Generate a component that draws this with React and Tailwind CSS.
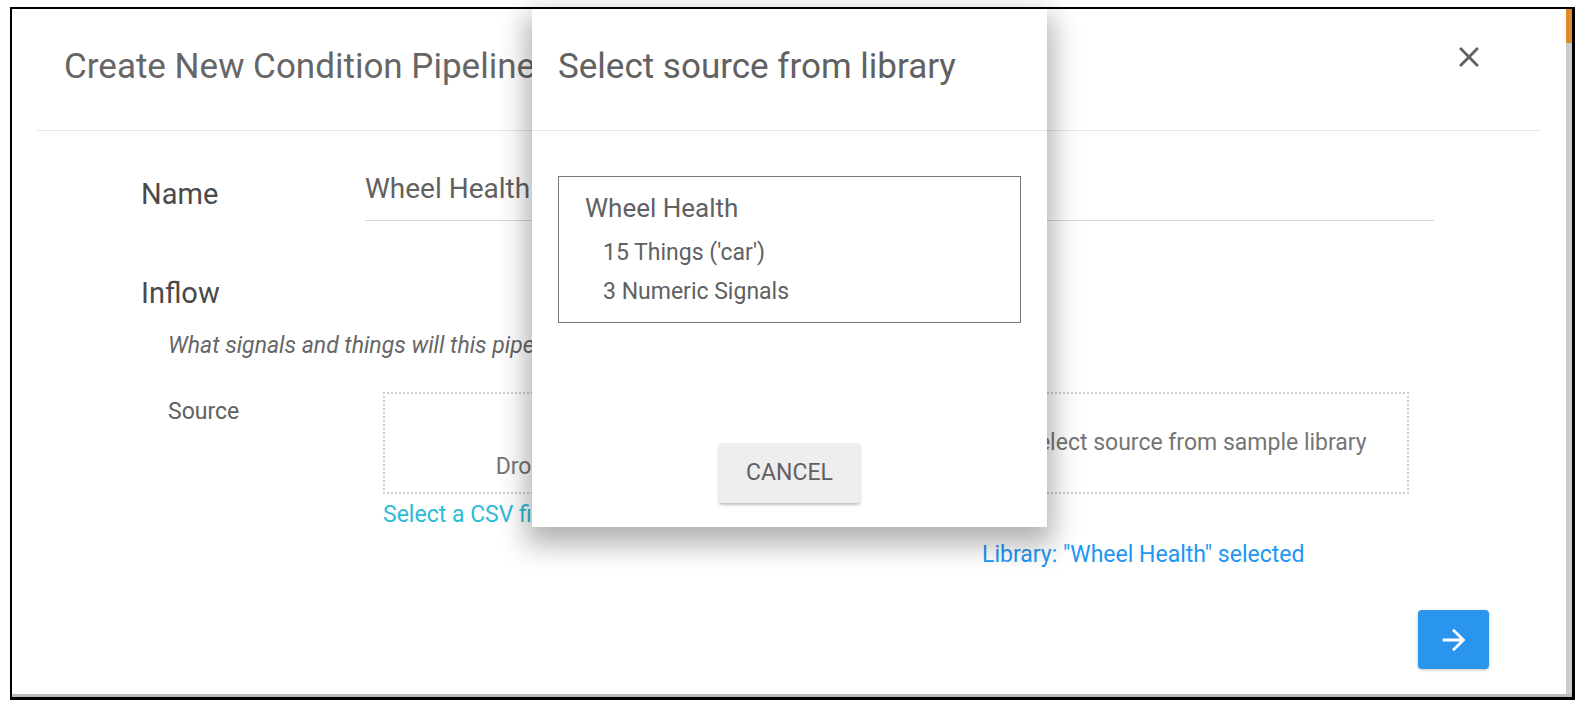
import React from "react";

const font = { fontFamily: "Roboto, 'Liberation Sans', sans-serif" };

function CloseIcon() {
  return (
    <svg viewBox="0 0 24 24" className="w-[34px] h-[34px] fill-[#616161]">
      <path d="M19 6.41L17.59 5 12 10.59 6.41 5 5 6.41 10.59 12 5 17.59 6.41 19 12 13.41 17.59 19 19 17.59 13.41 12z" />
    </svg>
  );
}

function ArrowIcon() {
  return (
    <svg viewBox="0 0 24 24" className="w-[34px] h-[34px] fill-white">
      <path d="M12 4l-1.41 1.41L16.17 11H4v2h12.17l-5.58 5.59L12 20l8-8z" />
    </svg>
  );
}

function UploadIcon() {
  return (
    <svg viewBox="0 0 24 24" className="w-[34px] h-[34px] fill-[#9e9e9e]">
      <path d="M19.35 10.04C18.67 6.59 15.64 4 12 4 9.11 4 6.6 5.64 5.35 8.04 2.34 8.36 0 10.91 0 14c0 3.31 2.69 6 6 6h13c2.76 0 5-2.24 5-5 0-2.64-2.05-4.78-4.65-4.96zM14 13v4h-4v-4H7l5-5 5 5h-3z" />
    </svg>
  );
}

function LibraryDialog() {
  return (
    <div className="absolute left-[520px] top-0 w-[515px] h-[518px] bg-white flex flex-col shadow-[0_12px_26px_6px_rgba(0,0,0,0.3)]">
      <div className="h-[122px] border-b border-[#e6e6e6] pl-[26px]">
        <h2 className="mt-[38px] text-[35px] leading-[40px] text-[#616161]">Select source from library</h2>
      </div>
      <div className="mx-[26px] mt-[45px] border border-[#777777] pl-[26px] pt-[15px] pb-[16px] text-[#616161]">
        <p className="text-[26px] leading-[32px]">Wheel Health</p>
        <p className="mt-[15px] pl-[18px] text-[23px] leading-[28px]">15 Things ('car')</p>
        <p className="mt-[11px] pl-[18px] text-[23px] leading-[28px]">3 Numeric Signals</p>
      </div>
      <div className="mt-auto mb-[24px] flex justify-center">
        <button className="w-[141px] h-[60px] rounded-[3px] bg-[#eeeeee] text-[23px] text-[#616161] shadow-[0_2px_3px_rgba(0,0,0,0.25)]">
          CANCEL
        </button>
      </div>
    </div>
  );
}

export default function App() {
  return (
    <div className="w-[1586px] h-[710px] bg-white overflow-hidden pt-[7px] pl-[10px]" style={font}>
      <div className="w-[1565px] h-[693px] border-t-2 border-l-2 border-r-[3px] border-b-[3px] border-black flex flex-col">
        <div className="flex-1 flex min-h-0">
          <div className="relative flex-1 flex flex-col">
            {/* header */}
            <div className="mx-[25px] h-[122px] border-b border-[#e6e6e6] flex justify-between items-start pl-[27px] pr-[55px]">
              <h1 className="mt-[38px] text-[35px] leading-[40px] text-[#666666]">Create New Condition Pipeline</h1>
              <button className="mt-[31px]">
                <CloseIcon />
              </button>
            </div>

            {/* name */}
            <div className="flex items-start pl-[129px] pr-[132px]">
              <label className="w-[224px] mt-[46px] text-[29px] leading-[34px] text-[#4a4a4a]">Name</label>
              <div className="flex-1 mt-[41px] pb-[14px] border-b border-[#d6d6d6] text-[28px] leading-[34px] text-[#616161]">
                Wheel Health
              </div>
            </div>

            {/* inflow */}
            <div className="pl-[129px]">
              <h3 className="mt-[55px] text-[29px] leading-[34px] text-[#4a4a4a]">Inflow</h3>
              <p className="mt-[22px] pl-[27px] text-[23px] leading-[28px] italic text-[#666666]">
                What signals and things will this pipeline process?
              </p>
            </div>

            <div className="flex items-start mt-[32px] pl-[156px] pr-[157px]">
              <span className="w-[215px] mt-[6px] text-[23px] leading-[28px] text-[#616161]">Source</span>
              <div className="flex-1 flex gap-[25px]">
                <div className="flex-1">
                  <div className="h-[102px] border-2 border-dotted border-[#cfcfcf] flex flex-col items-center justify-center gap-[4px] pt-[10px] pl-[8px]">
                    <UploadIcon />
                    <span className="text-[23px] leading-[28px] text-[#757575] whitespace-nowrap">Drop CSV file here or click to select</span>
                  </div>
                  <p className="mt-[7px] text-[23px] leading-[28px] text-[#2bbcd6]">Select a CSV file to begin</p>
                </div>
                <div className="w-[427px]">
                  <div className="h-[102px] border-2 border-dotted border-[#cfcfcf] flex items-center justify-center">
                    <span className="text-[23px] leading-[28px] text-[#757575] whitespace-nowrap">Select source from sample library</span>
                  </div>
                  <p className="mt-[47px] text-[23px] leading-[28px] text-[#2196f3] whitespace-nowrap">Library: "Wheel Health" selected</p>
                </div>
              </div>
            </div>

            <div className="flex justify-end pr-[77px] mt-[41px]">
              <button className="w-[71px] h-[59px] rounded-[4px] bg-[#2a95ec] flex items-center justify-center shadow-[0_1px_3px_rgba(0,0,0,0.25)]">
                <ArrowIcon />
              </button>
            </div>

            <LibraryDialog />
          </div>
          {/* scrollbar strip */}
          <div className="w-[6px] flex flex-col bg-[#cccccc]">
            <div className="h-[34px] bg-[#e08a2c]" />
          </div>
        </div>
        <div className="h-[3px] bg-[#bbbbbb]" />
      </div>
    </div>
  );
}
